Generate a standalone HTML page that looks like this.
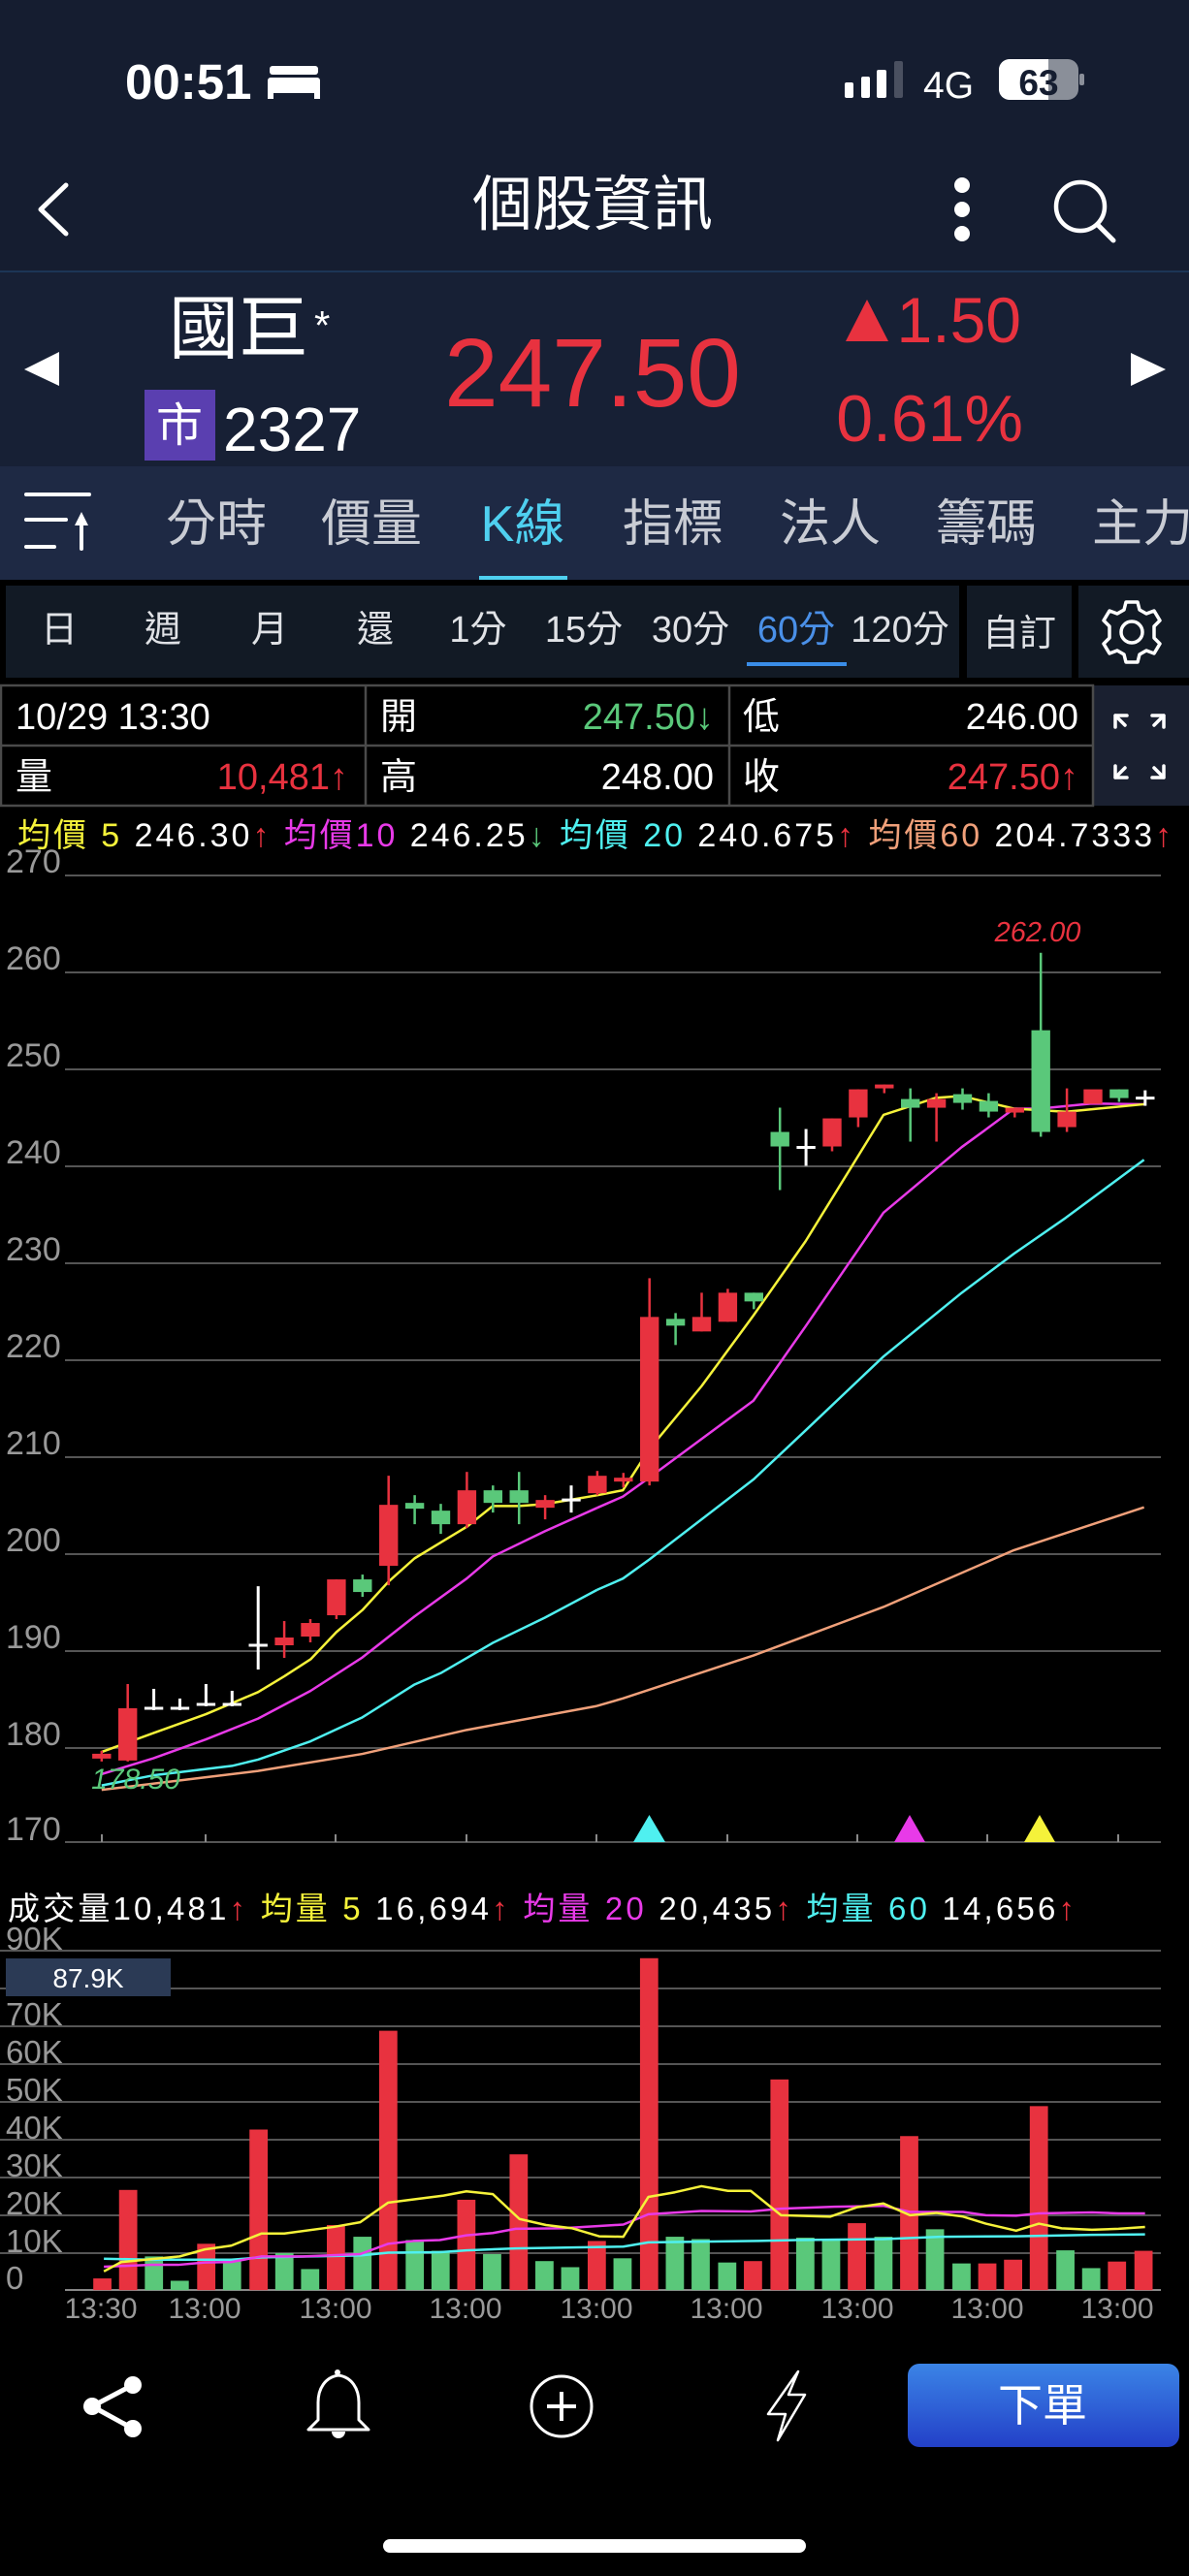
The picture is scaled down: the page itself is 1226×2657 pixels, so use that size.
<!DOCTYPE html>
<html><head><meta charset="utf-8"><style>
html,body{margin:0;padding:0;background:#000;}
body{width:1226px;height:2657px;overflow:hidden;}
svg{display:block;}
text{font-family:"Liberation Sans","Noto Sans CJK TC",sans-serif;}
.cjk{font-family:"Noto Sans CJK TC","Liberation Sans",sans-serif;}
</style></head><body>
<svg width="1226" height="2657" viewBox="0 0 1226 2657" xmlns="http://www.w3.org/2000/svg">
<rect width="1226" height="2657" fill="#000"/>
<rect x="0" y="0" width="1226" height="279" fill="#151d30"/>
<rect x="0" y="279" width="1226" height="2" fill="#1c3556"/>
<rect x="0" y="281" width="1226" height="200" fill="#172035"/>
<rect x="0" y="481" width="1226" height="117" fill="#1e2944"/>
<text x="129" y="102" font-size="51" font-weight="bold" fill="#fff">00:51</text>
<g fill="#fff"><rect x="278" y="68" width="50" height="9" rx="3"/><rect x="276" y="80" width="54" height="16" rx="3"/><rect x="276" y="90" width="6" height="12"/><rect x="324" y="90" width="6" height="12"/></g>
<g fill="#fff"><rect x="871" y="85" width="9" height="16" rx="2"/><rect x="888" y="79" width="9" height="22" rx="2"/><rect x="904" y="72" width="10" height="29" rx="2"/><rect x="922" y="63" width="9" height="38" rx="2" fill="#4a5060"/></g>
<text x="952" y="101" font-size="39" fill="#fff">4G</text>
<rect x="1030" y="61" width="82" height="42" rx="11" fill="#8a8f99"/>
<path d="M1041 61 H1081 V103 H1041 A11 11 0 0 1 1030 92 V72 A11 11 0 0 1 1041 61 Z" fill="#fff"/>
<rect x="1113" y="76" width="5" height="12" rx="2" fill="#8a8f99"/>
<text x="1071" y="98" font-size="37" font-weight="bold" fill="#151d30" text-anchor="middle">63</text>
<path d="M68 191 L42 216 L68 241" stroke="#fff" stroke-width="5" fill="none" stroke-linecap="round" stroke-linejoin="round"/>
<text x="611" y="232" font-size="62" fill="#fff" text-anchor="middle" class="cjk">個股資訊</text>
<g fill="#fff"><circle cx="992" cy="191" r="8"/><circle cx="992" cy="216" r="8"/><circle cx="992" cy="241" r="8"/></g>
<circle cx="1114" cy="213" r="25" stroke="#fff" stroke-width="4.5" fill="none"/>
<path d="M1132 232 L1148 248" stroke="#fff" stroke-width="5" stroke-linecap="round"/>
<path d="M61 363 V398 L25 381 Z" fill="#fff"/>
<path d="M1166 364 V398 L1202 381 Z" fill="#fff"/>
<text x="174" y="364" font-size="72" fill="#fff" class="cjk">國巨</text>
<text x="324" y="350" font-size="42" fill="#fff">*</text>
<rect x="149" y="402" width="73" height="73" fill="#5a3fb0"/>
<text x="185" y="455" font-size="48" fill="#fff" text-anchor="middle" class="cjk">市</text>
<text x="230" y="465" font-size="64" fill="#fff">2327</text>
<text x="611" y="419" font-size="100" fill="#e8323f" text-anchor="middle">247.50</text>
<path d="M894 309 L916 352 H872 Z" fill="#e8323f"/>
<text x="1053" y="353" font-size="66" fill="#e8323f" text-anchor="end">1.50</text>
<text x="1055" y="455" font-size="68" fill="#e8323f" text-anchor="end">0.61%</text>
<g stroke="#fff" stroke-width="4" stroke-linecap="round"><path d="M27 510 H92"/><path d="M27 536 H68"/><path d="M27 564 H56"/><path d="M84 537 V566"/></g>
<path d="M84 528 L77 542 H91 Z" fill="#fff"/>
<g font-size="52" fill="#c9ccd4" class="cjk" text-anchor="middle">
<text x="223" y="558">分時</text><text x="383" y="558">價量</text><text x="539" y="558" fill="#4fd0f0">K線</text><text x="694" y="558">指標</text><text x="856" y="558">法人</text><text x="1017" y="558">籌碼</text><text x="1178" y="558">主力</text></g>
<rect x="494" y="594" width="91" height="4" fill="#4fd0f0"/>
<rect x="6" y="604" width="983" height="95" fill="#121a25"/>
<rect x="997" y="604" width="108" height="95" fill="#121a25"/>
<rect x="1112" y="604" width="114" height="95" fill="#121a25"/>
<g font-size="38" fill="#e0e2e6" class="cjk" text-anchor="middle">
<text x="61" y="662">日</text><text x="168" y="662">週</text><text x="278" y="662">月</text><text x="387" y="662">還</text><text x="493" y="662">1分</text><text x="602" y="662">15分</text><text x="712" y="662">30分</text><text x="821" y="662" fill="#4a90e8">60分</text><text x="928" y="662">120分</text><text x="1051" y="666">自訂</text></g>
<rect x="770" y="683" width="103" height="4" fill="#3a8de8"/>
<g transform="translate(1167,652)" fill="none" stroke="#fff" stroke-width="3.5">
<path d="M-6 -31 H6 L8 -23 L15 -19 L23 -22 L29 -12 L23 -6 V6 L29 12 L23 22 L15 19 L8 23 L6 31 H-6 L-8 23 L-15 19 L-23 22 L-29 12 L-23 6 V-6 L-29 -12 L-23 -22 L-15 -19 L-8 -23 Z" stroke-linejoin="round"/>
<circle r="11"/></g>
<rect x="1127" y="707" width="99" height="124" fill="#1a2030"/>
<g stroke="#4a4a4a" stroke-width="2.5" fill="none"><rect x="1" y="707" width="1126" height="124"/><path d="M1 769 H1127 M377 707 V831 M752 707 V831"/></g>
<g font-size="38" fill="#fff">
<text x="16" y="752">10/29 13:30</text>
<text x="392" y="752" class="cjk">開</text><text x="736" y="752" text-anchor="end" fill="#5ac87a">247.50↓</text>
<text x="766" y="752" class="cjk">低</text><text x="1112" y="752" text-anchor="end">246.00</text>
<text x="16" y="814" class="cjk">量</text><text x="359" y="814" text-anchor="end" fill="#e8323f">10,481↑</text>
<text x="392" y="814" class="cjk">高</text><text x="736" y="814" text-anchor="end">248.00</text>
<text x="766" y="814" class="cjk">收</text><text x="1112" y="814" text-anchor="end" fill="#e8323f">247.50↑</text></g>
<g stroke="#fff" stroke-width="3.5" stroke-linecap="round" fill="none"><path d="M1150 738 L1160 748 M1150 738 V750 M1150 738 H1162 M1200 738 L1190 748 M1200 738 V750 M1200 738 H1188 M1150 802 L1160 792 M1150 802 V790 M1150 802 H1162 M1200 802 L1190 792 M1200 802 V790 M1200 802 H1188"/></g>
<text x="18" y="873" font-size="34" fill="#fff" textLength="1190" lengthAdjust="spacing"><tspan fill="#f5f23a" class="cjk">均價</tspan><tspan fill="#f5f23a"> 5</tspan> 246.30<tspan fill="#e8323f">↑</tspan> <tspan fill="#e83ae8" class="cjk">均價</tspan><tspan fill="#e83ae8">10</tspan> 246.25<tspan fill="#5ac87a">↓</tspan> <tspan fill="#4ff0f0" class="cjk">均價</tspan><tspan fill="#4ff0f0"> 20</tspan> 240.675<tspan fill="#e8323f">↑</tspan> <tspan fill="#f0a07a" class="cjk">均價</tspan><tspan fill="#f0a07a">60</tspan> 204.7333<tspan fill="#e8323f">↑</tspan></text>
<g stroke="#555" stroke-width="2">
<path d="M67 903 H1197 M67 1003 H1197 M67 1103 H1197 M67 1203 H1197 M67 1303 H1197 M67 1403 H1197 M67 1503 H1197 M67 1603 H1197 M67 1703 H1197 M67 1803 H1197 M67 1900 H1197"/></g>
<g stroke="#888" stroke-width="2"><path d="M105 1892 V1900 M212 1892 V1900 M346 1892 V1900 M481 1892 V1900 M615 1892 V1900 M750 1892 V1900 M884 1892 V1900 M1018 1892 V1900 M1153 1892 V1900"/></g>
<g font-size="34" fill="#999">
<text x="6" y="900">270</text><text x="6" y="1000">260</text><text x="6" y="1100">250</text><text x="6" y="1200">240</text><text x="6" y="1300">230</text><text x="6" y="1400">220</text><text x="6" y="1500">210</text><text x="6" y="1600">200</text><text x="6" y="1700">190</text><text x="6" y="1800">180</text><text x="6" y="1898">170</text></g>
<g fill="none" stroke-width="2.5" stroke-linejoin="round" transform="translate(0,880) scale(0.3954,0.6506)">
<polyline vector-effect="non-scaling-stroke" stroke="#f0a07a" points="265,1485 537,1465 673,1455 945,1428 1217,1390 1557,1352"/>
<polyline vector-effect="non-scaling-stroke" stroke="#4ff0f0" points="265,1478 400,1462 537,1452 605,1447 673,1437 810,1408 945,1370 1081,1318 1149,1300 1285,1252 1421,1212 1557,1168"/>
<polyline vector-effect="non-scaling-stroke" stroke="#e83ae8" points="265,1460 400,1435 537,1405 673,1372 810,1328 945,1275 1081,1210 1217,1150 1285,1115 1421,1075 1557,1038"/>
<polyline vector-effect="non-scaling-stroke" stroke="#f5f23a" points="265,1425 400,1395 537,1365 673,1330 741,1305 810,1278 877,1235 945,1200 1013,1155 1081,1118 1149,1093 1217,1068 1285,1035 1353,1035 1421,1032 1489,1025 1557,1018"/>
</g>
<g fill="none" stroke-width="2.5" stroke-linejoin="round" transform="translate(600,880) scale(0.3992,0.6506)">
<polyline vector-effect="non-scaling-stroke" stroke="#f0a07a" points="39,1352 106,1340 443,1272 779,1195 1116,1105 1452,1037"/>
<polyline vector-effect="non-scaling-stroke" stroke="#4ff0f0" points="39,1168 106,1150 174,1120 443,993 578,915 779,798 981,697 1116,635 1250,578 1452,486"/>
<polyline vector-effect="non-scaling-stroke" stroke="#e83ae8" points="39,1038 106,1020 174,990 443,868 578,750 779,570 981,466 1048,436 1116,405 1183,405 1317,397 1452,398"/>
<polyline vector-effect="non-scaling-stroke" stroke="#f5f23a" points="39,1018 106,1010 174,945 309,845 443,733 578,615 779,415 913,388 981,385 1116,405 1250,410 1452,398"/>
</g>
<g transform="matrix(26.9,0,0,-9.99,104.8,3600.1)">
<g stroke="#e8323f" fill="#e8323f" stroke-width="2.5">
<line vector-effect="non-scaling-stroke" x1="0" x2="0" y1="178.5" y2="179.6"/><rect x="-0.36" width="0.72" y="178.8" height="0.5" stroke="none"/>
<line vector-effect="non-scaling-stroke" x1="1" x2="1" y1="178.5" y2="186.5"/><rect x="0.64" width="0.72" y="178.6" height="5.4" stroke="none"/>
<line vector-effect="non-scaling-stroke" x1="7" x2="7" y1="189.2" y2="193"/><rect x="6.64" width="0.72" y="190.5" height="0.8" stroke="none"/>
<line vector-effect="non-scaling-stroke" x1="8" x2="8" y1="190.8" y2="193.2"/><rect x="7.64" width="0.72" y="191.4" height="1.4" stroke="none"/>
<line vector-effect="non-scaling-stroke" x1="9" x2="9" y1="193.2" y2="197.3"/><rect x="8.64" width="0.72" y="193.6" height="3.7" stroke="none"/>
<line vector-effect="non-scaling-stroke" x1="11" x2="11" y1="196.7" y2="208"/><rect x="10.64" width="0.72" y="198.7" height="6.3" stroke="none"/>
<line vector-effect="non-scaling-stroke" x1="14" x2="14" y1="202.6" y2="208.4"/><rect x="13.64" width="0.72" y="203" height="3.5" stroke="none"/>
<line vector-effect="non-scaling-stroke" x1="17" x2="17" y1="203.5" y2="206"/><rect x="16.64" width="0.72" y="204.7" height="0.8" stroke="none"/>
<line vector-effect="non-scaling-stroke" x1="19" x2="19" y1="206" y2="208.5"/><rect x="18.64" width="0.72" y="206.2" height="1.8" stroke="none"/>
<line vector-effect="non-scaling-stroke" x1="20" x2="20" y1="206.8" y2="208.3"/><rect x="19.64" width="0.72" y="207.4" height="0.4" stroke="none"/>
<line vector-effect="non-scaling-stroke" x1="21" x2="21" y1="207" y2="228.4"/><rect x="20.64" width="0.72" y="207.4" height="17" stroke="none"/>
<line vector-effect="non-scaling-stroke" x1="23" x2="23" y1="222.9" y2="226.9"/><rect x="22.64" width="0.72" y="222.9" height="1.5" stroke="none"/>
<line vector-effect="non-scaling-stroke" x1="24" x2="24" y1="223.9" y2="227.3"/><rect x="23.64" width="0.72" y="223.9" height="3" stroke="none"/>
<line vector-effect="non-scaling-stroke" x1="28" x2="28" y1="241.5" y2="244.9"/><rect x="27.64" width="0.72" y="242" height="2.9" stroke="none"/>
<line vector-effect="non-scaling-stroke" x1="29" x2="29" y1="244" y2="247.9"/><rect x="28.64" width="0.72" y="245" height="2.9" stroke="none"/>
<line vector-effect="non-scaling-stroke" x1="30" x2="30" y1="247.5" y2="248.4"/><rect x="29.64" width="0.72" y="248" height="0.4" stroke="none"/>
<line vector-effect="non-scaling-stroke" x1="32" x2="32" y1="242.5" y2="247.5"/><rect x="31.64" width="0.72" y="246" height="0.9" stroke="none"/>
<line vector-effect="non-scaling-stroke" x1="35" x2="35" y1="245" y2="246"/><rect x="34.64" width="0.72" y="245.5" height="0.5" stroke="none"/>
<line vector-effect="non-scaling-stroke" x1="37" x2="37" y1="243.5" y2="248"/><rect x="36.64" width="0.72" y="244" height="1.6" stroke="none"/>
<rect x="37.64" width="0.72" y="246.4" height="1.5" stroke="none"/>
</g>
<g stroke="#5ac87a" fill="#5ac87a" stroke-width="2.5">
<line vector-effect="non-scaling-stroke" x1="10" x2="10" y1="195.5" y2="197.8"/><rect x="9.64" width="0.72" y="196" height="1.3" stroke="none"/>
<line vector-effect="non-scaling-stroke" x1="12" x2="12" y1="203" y2="206"/><rect x="11.64" width="0.72" y="204.6" height="0.6" stroke="none"/>
<line vector-effect="non-scaling-stroke" x1="13" x2="13" y1="202" y2="205.1"/><rect x="12.64" width="0.72" y="203" height="1.4" stroke="none"/>
<line vector-effect="non-scaling-stroke" x1="15" x2="15" y1="204.2" y2="207"/><rect x="14.64" width="0.72" y="205.2" height="1.3" stroke="none"/>
<line vector-effect="non-scaling-stroke" x1="16" x2="16" y1="203" y2="208.4"/><rect x="15.64" width="0.72" y="205.2" height="1.3" stroke="none"/>
<line vector-effect="non-scaling-stroke" x1="22" x2="22" y1="221.5" y2="224.8"/><rect x="21.64" width="0.72" y="223.5" height="0.7" stroke="none"/>
<line vector-effect="non-scaling-stroke" x1="25" x2="25" y1="225.2" y2="226.9"/><rect x="24.64" width="0.72" y="226" height="0.9" stroke="none"/>
<line vector-effect="non-scaling-stroke" x1="26" x2="26" y1="237.5" y2="246"/><rect x="25.64" width="0.72" y="242" height="1.5" stroke="none"/>
<line vector-effect="non-scaling-stroke" x1="31" x2="31" y1="242.5" y2="248"/><rect x="30.64" width="0.72" y="246" height="0.9" stroke="none"/>
<line vector-effect="non-scaling-stroke" x1="33" x2="33" y1="245.8" y2="248"/><rect x="32.64" width="0.72" y="246.5" height="0.9" stroke="none"/>
<line vector-effect="non-scaling-stroke" x1="34" x2="34" y1="245" y2="247.5"/><rect x="33.64" width="0.72" y="245.6" height="1.1" stroke="none"/>
<line vector-effect="non-scaling-stroke" x1="36" x2="36" y1="243" y2="262"/><rect x="35.64" width="0.72" y="243.5" height="10.5" stroke="none"/>
<line vector-effect="non-scaling-stroke" x1="39" x2="39" y1="246.6" y2="247.9"/><rect x="38.64" width="0.72" y="247" height="0.9" stroke="none"/>
</g>
<g stroke="#fff" stroke-width="3">
<line vector-effect="non-scaling-stroke" x1="2" x2="2" y1="183.8" y2="186"/><line vector-effect="non-scaling-stroke" x1="1.64" x2="2.36" y1="184" y2="184"/>
<line vector-effect="non-scaling-stroke" x1="3" x2="3" y1="183.8" y2="185"/><line vector-effect="non-scaling-stroke" x1="2.64" x2="3.36" y1="184" y2="184"/>
<line vector-effect="non-scaling-stroke" x1="4" x2="4" y1="184.2" y2="186.5"/><line vector-effect="non-scaling-stroke" x1="3.64" x2="4.36" y1="184.4" y2="184.4"/>
<line vector-effect="non-scaling-stroke" x1="5" x2="5" y1="184.2" y2="185.8"/><line vector-effect="non-scaling-stroke" x1="4.64" x2="5.36" y1="184.4" y2="184.4"/>
<line vector-effect="non-scaling-stroke" x1="6" x2="6" y1="188" y2="196.6"/><line vector-effect="non-scaling-stroke" x1="5.64" x2="6.36" y1="190.5" y2="190.5"/>
<line vector-effect="non-scaling-stroke" x1="18" x2="18" y1="204.2" y2="207"/><line vector-effect="non-scaling-stroke" x1="17.64" x2="18.36" y1="205.5" y2="205.5"/>
<line vector-effect="non-scaling-stroke" x1="27" x2="27" y1="240" y2="243.8"/><line vector-effect="non-scaling-stroke" x1="26.64" x2="27.36" y1="241.9" y2="241.9"/>
<line vector-effect="non-scaling-stroke" x1="40" x2="40" y1="246.2" y2="247.8"/><line vector-effect="non-scaling-stroke" x1="39.64" x2="40.36" y1="247" y2="247" />
</g></g>
<text x="140" y="1845" font-size="30" fill="#5ac87a" font-style="italic" text-anchor="middle">178.50</text>
<text x="1070" y="971" font-size="29" fill="#e8323f" font-style="italic" text-anchor="middle">262.00</text>
<path d="M669.5 1872 L686 1900 H653 Z" fill="#4ff0f0"/>
<path d="M938 1872 L954 1900 H922 Z" fill="#e83ae8"/>
<path d="M1072 1872 L1088 1900 H1056 Z" fill="#f5f23a"/>
<text x="8" y="1980" font-size="33" fill="#fff" textLength="1100" lengthAdjust="spacing"><tspan class="cjk">成交量</tspan>10,481<tspan fill="#e8323f">↑</tspan> <tspan fill="#f5f23a" class="cjk">均量</tspan><tspan fill="#f5f23a"> 5</tspan> 16,694<tspan fill="#e8323f">↑</tspan> <tspan fill="#e83ae8" class="cjk">均量</tspan><tspan fill="#e83ae8"> 20</tspan> 20,435<tspan fill="#e8323f">↑</tspan> <tspan fill="#4ff0f0" class="cjk">均量</tspan><tspan fill="#4ff0f0"> 60</tspan> 14,656<tspan fill="#e8323f">↑</tspan></text>
<g stroke="#555" stroke-width="2"><path d="M0 2012 H1197 M0 2051 H1197 M0 2090 H1197 M0 2129 H1197 M0 2168 H1197 M0 2207 H1197 M0 2246 H1197 M0 2285 H1197 M0 2324 H1197"/></g>
<path d="M67 2362 H1197" stroke="#888" stroke-width="2"/>
<g font-size="33" fill="#999">
<text x="6" y="2011">90K</text><text x="6" y="2089">70K</text><text x="6" y="2128">60K</text><text x="6" y="2167">50K</text><text x="6" y="2206">40K</text><text x="6" y="2245">30K</text><text x="6" y="2284">20K</text><text x="6" y="2323">10K</text><text x="6" y="2361">0</text></g>
<rect x="6" y="2020" width="170" height="39" fill="#2b3a55"/>
<text x="91" y="2050" font-size="28" fill="#fff" text-anchor="middle">87.9K</text>
<g transform="translate(0,1900) scale(0.7819,0.4829)">
<g fill="#e8323f">
<rect x="123" y="932" width="24" height="25"/><rect x="157" y="743" width="24" height="214"/><rect x="260" y="858" width="24" height="99"/><rect x="329" y="614" width="24" height="343"/><rect x="431" y="818" width="24" height="139"/><rect x="500" y="403" width="24" height="554"/><rect x="603" y="764" width="24" height="193"/><rect x="672" y="667" width="24" height="290"/><rect x="775" y="852" width="24" height="105"/><rect x="844" y="248" width="24" height="709"/><rect x="981" y="895" width="24" height="62"/><rect x="1016" y="507" width="24" height="450"/><rect x="1118" y="814" width="24" height="143"/><rect x="1187" y="628" width="24" height="329"/><rect x="1290" y="900" width="24" height="57"/><rect x="1324" y="892" width="24" height="65"/><rect x="1358" y="564" width="24" height="393"/><rect x="1461" y="896" width="24" height="61"/><rect x="1496" y="873" width="24" height="84"/></g>
<g fill="#5ac87a">
<rect x="191" y="885" width="24" height="72"/><rect x="225" y="937" width="24" height="20"/><rect x="294" y="893" width="24" height="64"/><rect x="363" y="878" width="24" height="79"/><rect x="397" y="912" width="24" height="45"/><rect x="466" y="843" width="24" height="114"/><rect x="535" y="850" width="24" height="107"/><rect x="569" y="873" width="24" height="84"/><rect x="637" y="880" width="24" height="77"/><rect x="706" y="895" width="24" height="62"/><rect x="740" y="908" width="24" height="49"/><rect x="809" y="889" width="24" height="68"/><rect x="878" y="843" width="24" height="114"/><rect x="912" y="848" width="24" height="109"/><rect x="947" y="898" width="24" height="59"/><rect x="1050" y="845" width="24" height="112"/><rect x="1084" y="848" width="24" height="109"/><rect x="1153" y="843" width="24" height="114"/><rect x="1221" y="827" width="24" height="130"/><rect x="1256" y="900" width="24" height="57"/><rect x="1393" y="872" width="24" height="85"/><rect x="1427" y="910" width="24" height="47"/></g>
<g fill="none" stroke-width="2.5" stroke-linejoin="round">
<polyline vector-effect="non-scaling-stroke" stroke="#4ff0f0" points="137,890 200,892 305,892 345,887 475,883 512,877 580,876 615,872 680,868 822,864 855,855 1000,852 1050,850 1165,848 1240,843 1340,842 1440,839 1510,838"/>
<polyline vector-effect="non-scaling-stroke" stroke="#e83ae8" points="137,907 200,903 235,903 270,898 305,897 345,885 400,885 475,880 512,858 545,852 580,850 615,840 650,835 680,826 740,825 790,820 822,817 855,795 925,788 990,789 1030,783 1100,779 1165,777 1200,790 1270,790 1300,797 1340,798 1370,793 1440,791 1475,793 1510,793"/>
<polyline vector-effect="non-scaling-stroke" stroke="#f5f23a" points="137,917 160,897 237,885 270,870 305,862 345,836 375,836 440,822 475,812 512,770 585,755 615,746 650,752 685,805 720,818 755,825 790,842 822,843 855,758 890,748 925,735 960,745 990,745 1030,797 1095,800 1130,780 1165,772 1200,797 1235,792 1270,800 1300,815 1340,830 1370,815 1400,825 1440,828 1475,826 1510,822"/>
</g></g>
<g font-size="30" fill="#999" text-anchor="middle">
<text x="104" y="2391">13:30</text><text x="211" y="2391">13:00</text><text x="346" y="2391">13:00</text><text x="480" y="2391">13:00</text><text x="615" y="2391">13:00</text><text x="749" y="2391">13:00</text><text x="884" y="2391">13:00</text><text x="1018" y="2391">13:00</text><text x="1152" y="2391">13:00</text></g>
<g fill="#fff"><circle cx="137" cy="2460" r="9"/><circle cx="95" cy="2482" r="9"/><circle cx="137" cy="2505" r="9"/></g>
<path d="M137 2460 L95 2482 L137 2505" stroke="#fff" stroke-width="5" fill="none"/>
<path d="M349 2450 C335 2452 328 2464 328 2478 V2496 L318 2506 H380 L370 2496 V2478 C370 2464 363 2452 349 2450 Z" stroke="#fff" stroke-width="3" fill="none" stroke-linejoin="round"/>
<path d="M342 2508 A7 7 0 0 0 356 2508 Z" fill="#fff"/>
<circle cx="348" cy="2447" r="3" fill="#fff"/>
<circle cx="579" cy="2482" r="31" stroke="#fff" stroke-width="3" fill="none"/>
<path d="M579 2467 V2497 M564 2482 H594" stroke="#fff" stroke-width="4"/>
<path d="M823 2446 L792 2490 H810 L802 2517 L830 2470 H813 Z" stroke="#fff" stroke-width="2.5" fill="none" stroke-linejoin="round"/>
<defs><linearGradient id="bg" x1="0" y1="0" x2="0" y2="1"><stop offset="0" stop-color="#3b84e6"/><stop offset="1" stop-color="#2340c8"/></linearGradient></defs>
<rect x="936" y="2438" width="280" height="86" rx="12" fill="url(#bg)"/>
<text x="1075" y="2497" font-size="46" fill="#fff" text-anchor="middle" class="cjk">下單</text>
<rect x="395" y="2619" width="436" height="14" rx="7" fill="#fff"/>
</svg>
</body></html>
